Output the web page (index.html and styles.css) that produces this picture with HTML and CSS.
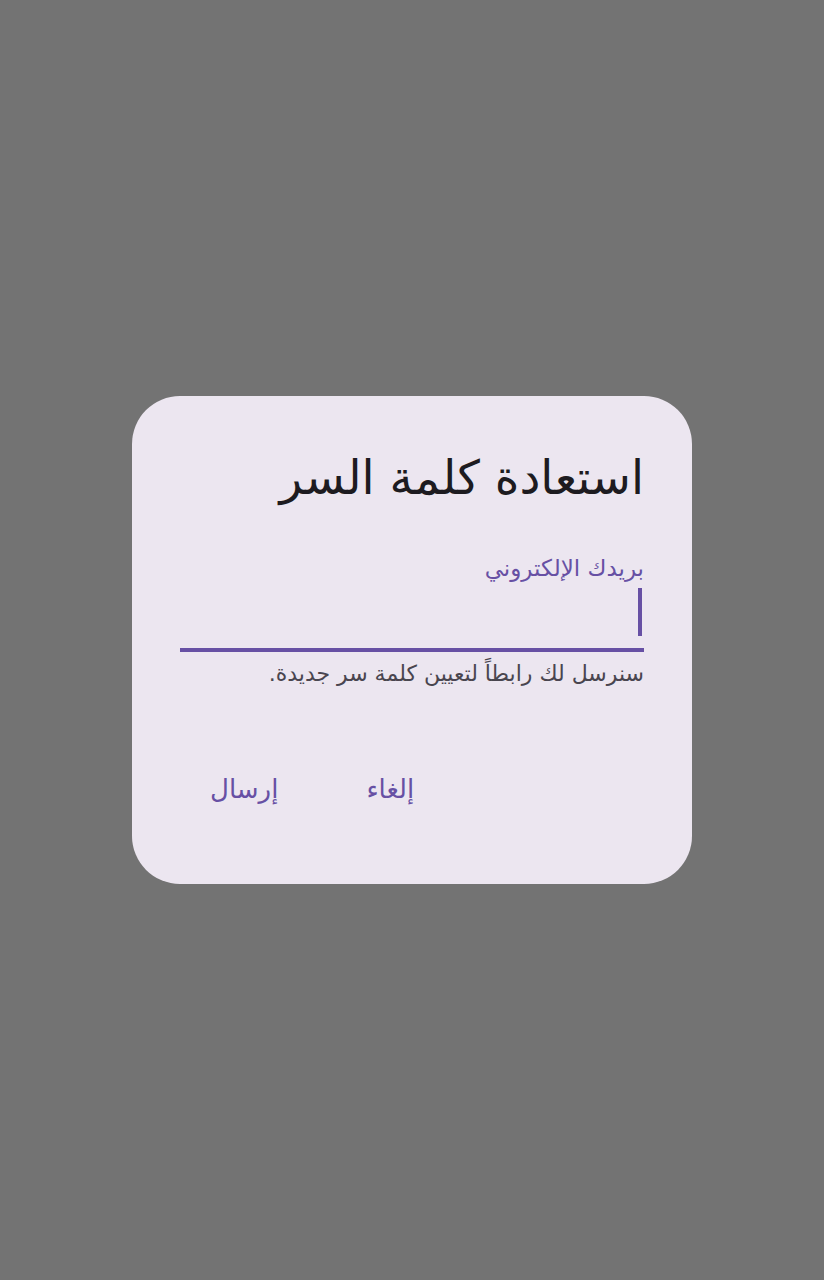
FILE: index.html
```html
<!DOCTYPE html>
<html lang="ar">
<head>
<meta charset="utf-8">
<title>استعادة كلمة السر</title>
<link rel="stylesheet" href="styles.css">
</head>
<body>
<div class="scrim">
  <div class="dialog" dir="rtl">
    <h1 class="title">استعادة كلمة السر</h1>
    <div class="field">
      <label class="label">بريدك الإلكتروني</label>
      <div class="input"><span class="cursor"></span></div>
    </div>
    <p class="helper">سنرسل لك رابطاً لتعيين كلمة سر جديدة.</p>
    <div class="actions">
      <button class="btn btn-cancel">إلغاء</button>
      <button class="btn">إرسال</button>
    </div>
  </div>
</div>
</body>
</html>
```
FILE: styles.css
```css
html, body {
  margin: 0;
  padding: 0;
}
body {
  background: #737373;
  font-family: "DejaVu Sans", "Noto Sans", sans-serif;
}
.scrim {
  height: 1280px;
  display: flex;
  align-items: center;
  justify-content: center;
}
.dialog {
  width: 560px;
  box-sizing: border-box;
  padding: 48px 48px 71px;
  background: #ECE6F0;
  border-radius: 48px;
}
.title {
  margin: 0;
  font-size: 47px;
  font-weight: normal;
  line-height: 60px;
  height: 60px;
  padding-top: 4px;
  color: #1D1B20;
  white-space: nowrap;
}
.field {
  margin-top: 40px;
  border-bottom: 4px solid #6750A4;
}
.label {
  display: block;
  font-size: 23px;
  line-height: 40px;
  color: #6750A4;
}
.input {
  height: 60px;
  display: flex;
  align-items: flex-start;
  padding-right: 2px;
}
.cursor {
  width: 4px;
  height: 48px;
  background: #6750A4;
}
.helper {
  margin: 2px 0 0;
  font-size: 22px;
  line-height: 40px;
  color: #49454F;
}
.actions {
  margin-top: 71px;
  height: 48px;
  display: flex;
  justify-content: flex-end;
  gap: 24px;
}
.btn {
  font-family: inherit;
  font-size: 26px;
  color: #6750A4;
  background: transparent;
  border: 0;
  padding: 0 30px;
  height: 48px;
  cursor: pointer;
}
.btn-cancel {
  padding: 0 22px 0 34px;
}
```
